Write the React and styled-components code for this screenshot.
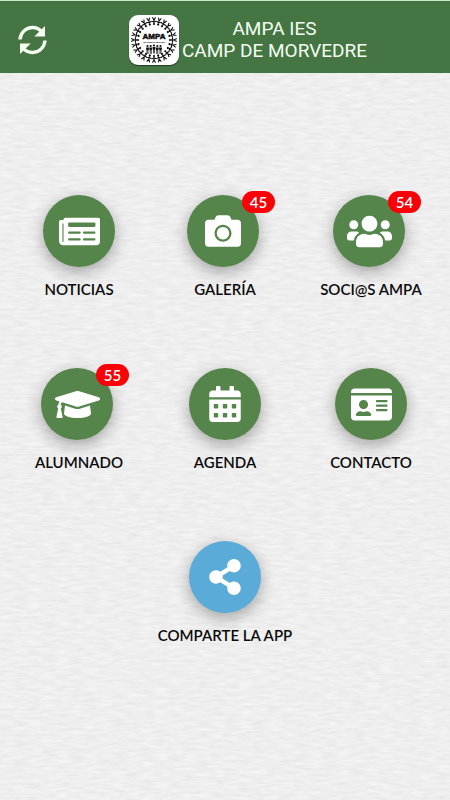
import React from "react";
import styled, { createGlobalStyle } from "styled-components";
import {
  FaNewspaper,
  FaCamera,
  FaUsers,
  FaGraduationCap,
  FaCalendarAlt,
  FaIdCard,
  FaShareAlt,
} from "react-icons/fa";

// paper grain, stretched along the horizontal axis
const paper = encodeURIComponent(
  `<svg xmlns="http://www.w3.org/2000/svg" width="450" height="400">
    <filter id="p" x="0" y="0" width="100%" height="100%" color-interpolation-filters="sRGB">
      <feTurbulence type="fractalNoise" baseFrequency="0.07 0.35" numOctaves="3" seed="8" stitchTiles="stitch"/>
      <feColorMatrix values="0.08 0 0 0 0.894  0.08 0 0 0 0.894  0.08 0 0 0 0.894  0 0 0 0 1"/>
    </filter>
    <rect width="450" height="400" filter="url(#p)"/>
  </svg>`
);

const GlobalStyle = createGlobalStyle`
  * {
    box-sizing: border-box;
  }

  body {
    margin: 0;
    font-family: Lato, "Liberation Sans", sans-serif;
    background: #eeeeee url("data:image/svg+xml,${paper}");
  }
`;

const Page = styled.div`
  min-height: 100vh;
`;

const Header = styled.header`
  display: flex;
  align-items: center;
  height: 73px;
  padding: 6px 2px 0 18px;
  border-top: 1px solid #c5f0c4;
  background: #447542;
`;

const RefreshButton = styled.button`
  display: flex;
  padding: 0;
  border: 0;
  color: #f4fff2;
  background: none;
  cursor: pointer;
`;

const Brand = styled.div`
  display: flex;
  flex: 1;
  align-items: center;
  justify-content: center;
  gap: 3px;
`;

const LogoBox = styled.div`
  display: flex;
  width: 50px;
  height: 50px;
  border-radius: 9px;
  background: #ffffff;
  box-shadow: 0 1px 1px rgba(0, 0, 0, 0.5);
`;

const Title = styled.h1`
  margin: 0;
  color: #f4fff2;
  font-family: Roboto, "Open Sans", sans-serif;
  font-size: 19px;
  font-weight: 400;
  line-height: 22px;
  text-align: center;
`;

const Menu = styled.nav`
  display: grid;
  grid-template-columns: repeat(3, 1fr);
  row-gap: 69px;
  padding: 122px 6px 40px;
`;

const MenuLink = styled.a`
  display: flex;
  flex-direction: column;
  align-items: center;
  grid-column: ${({ $wide }) => ($wide ? "1 / -1" : "auto")};
  color: #0a0a0a;
  text-decoration: none;
`;

const IconRow = styled.span`
  display: flex;
  align-items: flex-start;
`;

const Circle = styled.span`
  display: flex;
  align-items: center;
  justify-content: center;
  width: 72px;
  height: 72px;
  border-radius: 50%;
  color: #ffffff;
  background: ${({ $color }) => $color};
  box-shadow: 0 5px 16px rgba(0, 0, 0, 0.32);
`;

const Badge = styled.span`
  width: 33px;
  margin: -4px -12px 0 -17px;
  border-radius: 11px;
  color: #ffffff;
  font-size: 15px;
  font-weight: 600;
  line-height: 22px;
  text-align: center;
  background: #fb0007;
`;

const Label = styled.span`
  margin-top: 12px;
  font-size: 15px;
  font-weight: 600;
  line-height: 20px;
  white-space: nowrap;
`;

const RefreshIcon = () => (
  <svg width="30" height="30" viewBox="0 0 30 30" aria-hidden="true">
    <g fill="none" stroke="currentColor" strokeWidth="3.4">
      <path d="M2 14.5C2.5 7.5 8 2.500 14.5 2.500c4.300 0 7.500 1.800 10 5" />
      <path d="M27 15.500C26.500 22.500 21 27.500 14.500 27.500c-4.300 0-7.500-1.800-10-5" />
    </g>
    <path fill="currentColor" d="M27 1v10.500H16.300zM2 29V18.500h10.700z" />
  </svg>
);

const figures = Array.from({ length: 24 }, (_, i) => i * 15);

const Logo = () => (
  <svg width="50" height="50" viewBox="0 0 50 50" role="img" aria-label="AMPA">
    <defs>
      <g id="person">
        <circle cx="0" cy="-16" r="1.100" fill="#111" />
        <path
          d="M-2.500-18.800 0-18l2.500-.8M0-17v-3M-1.500-22.800 0-19.600l1.500-3.200"
          fill="none"
          stroke="#111"
          strokeWidth="1.100"
        />
      </g>
      <g id="child">
        <circle cx="0" cy="0" r="1.100" />
        <path d="M-1.400 1.400h2.800v2.400H.9V8H.2V4.500h-.4V8h-.7V3.800h-.5z" />
      </g>
    </defs>
    {figures.map((angle) => (
      <use
        key={angle}
        href="#person"
        transform={`translate(25 25) rotate(${angle})`}
      />
    ))}
    <text
      x="25"
      y="24"
      textAnchor="middle"
      fontFamily="Liberation Sans, sans-serif"
      fontSize="8"
      fontWeight="700"
      stroke="#111"
      strokeWidth="0.500"
    >
      AMPA
    </text>
    <text
      x="25"
      y="28"
      textAnchor="middle"
      fontFamily="Liberation Sans, sans-serif"
      fontSize="2"
      fontWeight="700"
    >
      IES Camp de Morvedre
    </text>
    <g fill="#111">
      <use href="#child" x="18.500" y="31" />
      <use href="#child" x="21.700" y="31" />
      <use href="#child" x="25" y="30.500" />
      <use href="#child" x="28.300" y="31" />
      <use href="#child" x="31.500" y="31" />
    </g>
  </svg>
);

const green = "#55854b";
const blue = "#5aabd7";

const items = [
  { title: "NOTICIAS", path: "#noticias", icon: <FaNewspaper size={41} /> },
  {
    title: "GALERÍA",
    path: "#galeria",
    icon: <FaCamera size={36} />,
    badge: 45,
  },
  {
    title: "SOCI@S AMPA",
    path: "#socios",
    icon: <FaUsers size={45} />,
    badge: 54,
  },
  {
    title: "ALUMNADO",
    path: "#alumnado",
    icon: <FaGraduationCap size={45} />,
    badge: 55,
  },
  { title: "AGENDA", path: "#agenda", icon: <FaCalendarAlt size={36} /> },
  { title: "CONTACTO", path: "#contacto", icon: <FaIdCard size={41} /> },
  {
    title: "COMPARTE LA APP",
    path: "#compartir",
    icon: <FaShareAlt size={36} />,
    color: blue,
    wide: true,
  },
];

const MenuItem = ({ item }) => (
  <MenuLink href={item.path} $wide={item.wide}>
    <IconRow>
      <Circle $color={item.color || green}>{item.icon}</Circle>
      {item.badge && <Badge>{item.badge}</Badge>}
    </IconRow>
    <Label>{item.title}</Label>
  </MenuLink>
);

const App = () => {
  return (
    <Page>
      <GlobalStyle />
      <Header>
        <RefreshButton type="button" aria-label="Actualizar">
          <RefreshIcon />
        </RefreshButton>
        <Brand>
          <LogoBox>
            <Logo />
          </LogoBox>
          <Title>
            AMPA IES
            <br />
            CAMP DE MORVEDRE
          </Title>
        </Brand>
      </Header>
      <Menu>
        {items.map((item) => (
          <MenuItem item={item} key={item.title} />
        ))}
      </Menu>
    </Page>
  );
};

export default App;
